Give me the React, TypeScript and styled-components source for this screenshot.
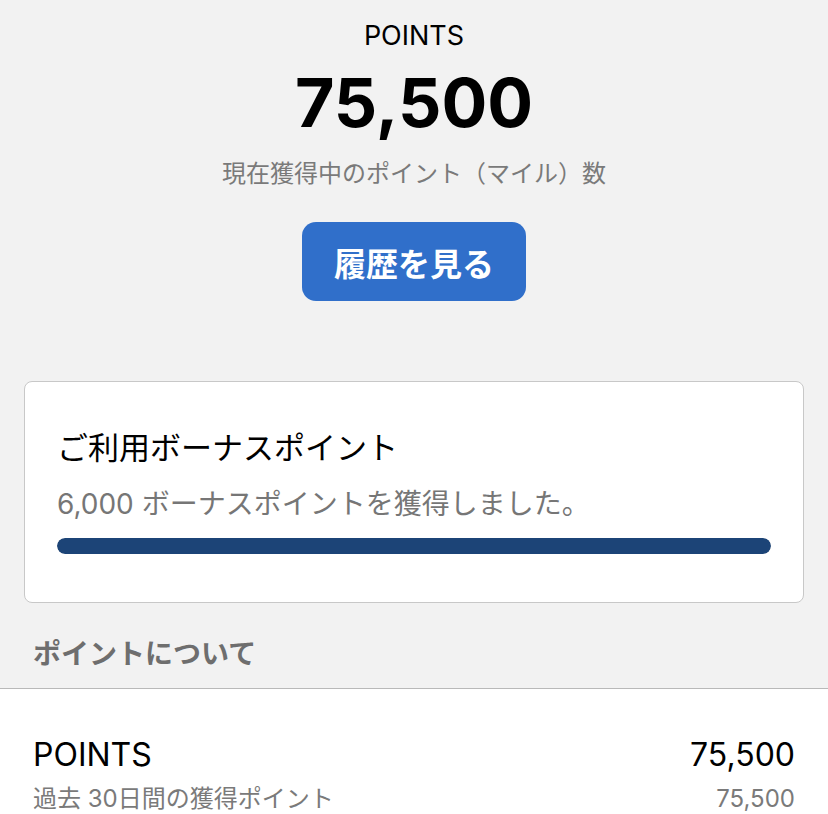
import styled, { createGlobalStyle } from "styled-components";

const GlobalStyle = createGlobalStyle`
  body {
    margin: 0;
    background: #f2f2f2;
    font-family: "Inter", "Noto Sans CJK JP", sans-serif;
    color: #000;
  }
`;

const Page = styled.div`
  width: 828px;
  min-height: 100vh;
  display: flex;
  flex-direction: column;
  overflow: hidden;
`;

const Summary = styled.section`
  display: flex;
  flex-direction: column;
  align-items: center;
  padding-top: 18px;
`;

const Label = styled.div`
  font-size: 27px;
  line-height: 36px;
`;

const Total = styled.div`
  font-size: 68px;
  font-weight: 700;
  line-height: 80px;
  margin-top: 8px;
`;

const Caption = styled.div`
  font-size: 24px;
  line-height: 32px;
  color: #7a7a7a;
  margin-top: 16px;
`;

const HistoryButton = styled.button`
  margin-top: 32px;
  width: 224px;
  height: 79px;
  border: none;
  border-radius: 14px;
  background: #306fca;
  color: #fff;
  font-family: inherit;
  font-size: 32px;
  font-weight: 700;
  cursor: pointer;
`;

const Card = styled.section`
  margin: 80px 24px 0;
  padding: 46px 32px 48px;
  background: #fff;
  border: 1px solid #c8c8c8;
  border-radius: 8px;
`;

const CardTitle = styled.div`
  font-size: 31px;
  line-height: 40px;
`;

const CardText = styled.div`
  margin-top: 17px;
  font-size: 28px;
  line-height: 38px;
  color: #767676;
`;

const Track = styled.div`
  margin-top: 15px;
  height: 16px;
  border-radius: 8px;
  background: #e4e4e4;
  overflow: hidden;
`;

const Fill = styled.div`
  height: 100%;
  border-radius: 8px;
  background: #1c4477;
`;

const SectionHeader = styled.h2`
  margin: 0;
  padding: 33px 33px 16px;
  font-size: 28px;
  line-height: 36px;
  font-weight: 700;
  color: #6e6e6e;
  border-bottom: 1px solid #b9b9b9;
`;

const List = styled.div`
  flex: 1;
  background: #fff;
  padding: 46px 33px 0;
`;

const Row = styled.div`
  display: flex;
  justify-content: space-between;
  align-items: baseline;
`;

const RowTitle = styled.span`
  font-size: 32px;
  line-height: 40px;
`;

const SubRow = styled(Row)`
  margin-top: 9px;
`;

const RowSub = styled.span`
  font-size: 24px;
  line-height: 30px;
  color: #7a7a7a;
`;

export default function App() {
  const earned = 6000;
  const goal = 6000;

  return (
    <Page>
      <GlobalStyle />
      <Summary>
        <Label>POINTS</Label>
        <Total>75,500</Total>
        <Caption>現在獲得中のポイント（マイル）数</Caption>
        <HistoryButton>履歴を見る</HistoryButton>
      </Summary>
      <Card>
        <CardTitle>ご利用ボーナスポイント</CardTitle>
        <CardText>6,000 ボーナスポイントを獲得しました。</CardText>
        <Track>
          <Fill style={{ width: `${(earned / goal) * 100}%` }} />
        </Track>
      </Card>
      <SectionHeader>ポイントについて</SectionHeader>
      <List>
        <Row>
          <RowTitle>POINTS</RowTitle>
          <RowTitle>75,500</RowTitle>
        </Row>
        <SubRow>
          <RowSub>過去 30日間の獲得ポイント</RowSub>
          <RowSub>75,500</RowSub>
        </SubRow>
      </List>
    </Page>
  );
}
